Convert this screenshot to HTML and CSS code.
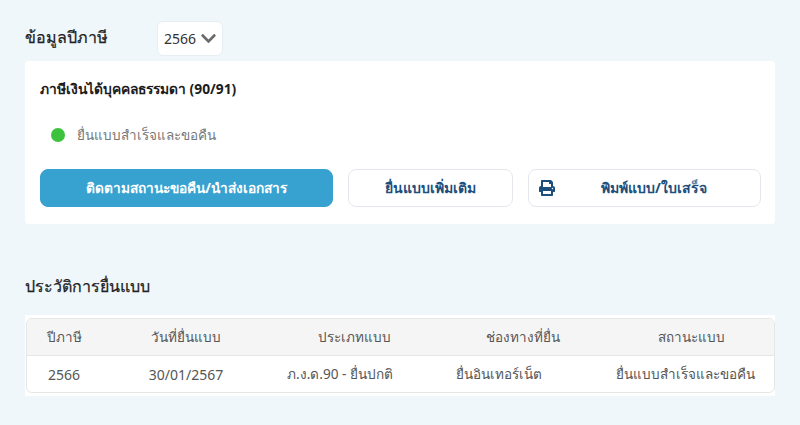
FILE: index.html
```html
<!DOCTYPE html>
<html lang="th">
<head>
  <meta charset="UTF-8">
  <title>ข้อมูลปีภาษี</title>
  <link rel="stylesheet" href="styles.css">
</head>
<body>
  <!-- Year selector -->
  <div class="year-row">
    <h2 class="heading">ข้อมูลปีภาษี</h2>
    <div class="year-select">
      <span>2566</span>
      <svg class="chevron" viewBox="0 0 448 512"><path d="M207.029 381.476L12.686 187.132c-9.373-9.373-9.373-24.569 0-33.941l22.667-22.667c9.357-9.357 24.522-9.375 33.901-.04L224 284.505l154.745-154.021c9.379-9.335 24.544-9.317 33.901.04l22.667 22.667c9.373 9.373 9.373 24.569 0 33.941L240.971 381.476c-9.373 9.372-24.569 9.372-33.942 0z"/></svg>
    </div>
  </div>

  <!-- Tax card -->
  <div class="card">
    <div class="card-title">ภาษีเงินได้บุคคลธรรมดา (90/91)</div>
    <div class="status">
      <span class="dot"></span>
      <span>ยื่นแบบสำเร็จและขอคืน</span>
    </div>
    <div class="actions">
      <button class="btn btn-primary">ติดตามสถานะขอคืน/นำส่งเอกสาร</button>
      <button class="btn btn-more">ยื่นแบบเพิ่มเติม</button>
      <button class="btn btn-print">
        <svg class="print-icon" viewBox="0 0 512 512"><path d="M448 192V77.25c0-8.49-3.37-16.62-9.37-22.63L393.37 9.37c-6-6-14.14-9.37-22.63-9.37H96C78.33 0 64 14.33 64 32v160c-35.35 0-64 28.65-64 64v112c0 8.84 7.16 16 16 16h48v96c0 17.67 14.33 32 32 32h320c17.67 0 32-14.33 32-32v-96h48c8.84 0 16-7.16 16-16V256c0-35.35-28.65-64-64-64zm-64 256H128v-96h256v96zm0-224H128V64h192v48c0 8.84 7.16 16 16 16h48v96zm48 72c-13.25 0-24-10.75-24-24 0-13.26 10.75-24 24-24s24 10.74 24 24c0 13.25-10.75 24-24 24z"/></svg>
        <span class="print-label">พิมพ์แบบ/ใบเสร็จ</span>
      </button>
    </div>
  </div>

  <!-- History -->
  <h2 class="heading history-heading">ประวัติการยื่นแบบ</h2>
  <div class="table-wrap">
    <table class="history">
      <colgroup>
        <col class="col-year"><col class="col-date"><col class="col-type"><col class="col-channel"><col class="col-status">
      </colgroup>
      <thead>
        <tr>
          <th>ปีภาษี</th>
          <th>วันที่ยื่นแบบ</th>
          <th>ประเภทแบบ</th>
          <th>ช่องทางที่ยื่น</th>
          <th>สถานะแบบ</th>
        </tr>
      </thead>
      <tbody>
        <tr>
          <td class="cell-num">2566</td>
          <td class="cell-num">30/01/2567</td>
          <td class="cell-type">ภ.ง.ด.90 - ยื่นปกติ</td>
          <td class="cell-channel">ยื่นอินเทอร์เน็ต</td>
          <td class="cell-status">ยื่นแบบสำเร็จและขอคืน</td>
        </tr>
      </tbody>
    </table>
  </div>
</body>
</html>
```

FILE: styles.css
```css
/* General Styles */
html, body {
  height: 100%;
}

body {
  margin: 0;
  padding: 21px 25px 0;
  box-sizing: border-box;
  overflow: hidden;
  background: #eff7fb;
  color: #333;
  font-family: "Noto Sans", "Open Sans", sans-serif;
  font-size: 13.5px;
}

.heading {
  margin: 0;
  font-size: 16px;
  font-weight: 400;
  line-height: 30px;
  white-space: nowrap;
  color: #222;
  -webkit-text-stroke: 0.25px #222;
}

/* Year selector */
.year-row {
  display: flex;
  align-items: flex-start;
  height: 40px;
}

.year-row .heading {
  width: 132px;
  margin-top: 1px;
}

.year-select {
  display: flex;
  align-items: center;
  gap: 5px;
  box-sizing: border-box;
  width: 66px;
  height: 35px;
  padding-left: 6px;
  font-size: 14px;
  background: #fff;
  border: 1px solid #e6eef2;
  border-radius: 6px;
}

.chevron {
  width: 15px;
  height: 17px;
  fill: #6b6b6b;
}

/* Tax card */
.card {
  box-sizing: border-box;
  height: 163px;
  padding: 16px 15px;
  background: #fff;
  border-radius: 4px;
}

.card-title {
  font-weight: 700;
  font-size: 13.8px;
  line-height: 24px;
  color: #1c1c1c;
}

.status {
  display: flex;
  align-items: center;
  gap: 12px;
  margin: 22px 0 0 11px;
  line-height: 24px;
  color: #777;
}

.dot {
  width: 14px;
  height: 14px;
  border-radius: 50%;
  background: #3cc23c;
}

.actions {
  display: flex;
  gap: 15px;
  margin-top: 22px;
}

.btn {
  flex: none;
  box-sizing: border-box;
  height: 38px;
  padding: 0;
  font-family: inherit;
  font-size: 14px;
  font-weight: 700;
  color: #1d4f7c;
  background: #fff;
  border: 1px solid #e4e8ec;
  border-radius: 8px;
}

.btn-primary {
  width: 293px;
  font-size: 13.7px;
  color: #fff;
  background: #37a2d0;
  border-color: #37a2d0;
}

.btn-more {
  width: 165px;
}

.btn-print {
  display: flex;
  align-items: center;
  width: 233px;
  padding: 0 7px 0 10px;
}

.print-icon {
  width: 16px;
  height: 16px;
  fill: #1d4f7c;
}

.print-label {
  flex: 1;
  text-align: center;
}

/* History */
.history-heading {
  margin-top: 47px;
}

.table-wrap {
  margin-top: 14px;
  padding: 3px 0 3px 1px;
  background: #fff;
}

.history {
  width: 749px;
  table-layout: fixed;
  border-collapse: separate;
  border-spacing: 0;
  border: 1px solid #e6e6e6;
  border-radius: 6px;
  color: #555;
}

.col-year { width: 74px; }
.col-date { width: 170px; }
.col-type { width: 166px; }
.col-channel { width: 172px; }

.history th,
.history td {
  height: 36px;
  padding: 0;
  font-weight: 400;
  text-align: center;
}

.history th {
  background: #f5f5f5;
  border-bottom: 1px solid #e6e6e6;
}

.history th:first-child { border-top-left-radius: 6px; }
.history th:last-child { border-top-right-radius: 6px; }

.history .cell-num { font-size: 14px; }
.history .cell-type { padding-right: 28px; font-size: 13.6px; }
.history .cell-channel { padding-right: 48px; }
.history .cell-status { padding-right: 12px; }
```
